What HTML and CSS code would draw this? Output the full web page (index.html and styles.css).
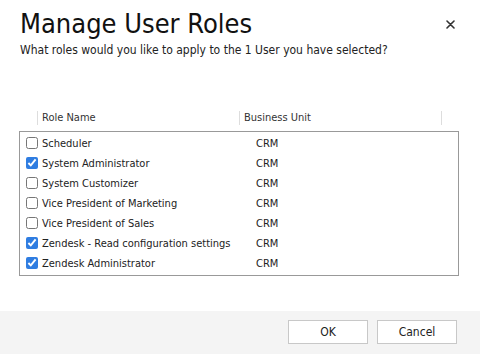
FILE: index.html
```html
<!DOCTYPE html>
<html>
<head>
<title>Manage User Roles</title>
<link rel="stylesheet" href="styles.css">
</head>
<body>

<div class="dialog">
  <div class="header">
    <h1 class="title">Manage User Roles</h1>
    <button class="close" title="Close">
      <svg width="9" height="9" viewBox="0 0 9 9"><path d="M1 1L8 8M8 1L1 8" stroke="#333" stroke-width="1.6" stroke-linecap="round"/></svg>
    </button>
  </div>
  <p class="subtitle">What roles would you like to apply to the 1 User you have selected?</p>

  <div class="grid-head">
    <div class="col col-name">Role Name</div>
    <div class="col col-unit">Business Unit</div>
    <div class="col col-end"></div>
  </div>

  <div class="grid">
    <label class="row"><input type="checkbox"><span class="name">Scheduler</span><span class="unit">CRM</span></label>
    <label class="row"><input type="checkbox" checked><span class="name">System Administrator</span><span class="unit">CRM</span></label>
    <label class="row"><input type="checkbox"><span class="name">System Customizer</span><span class="unit">CRM</span></label>
    <label class="row"><input type="checkbox"><span class="name">Vice President of Marketing</span><span class="unit">CRM</span></label>
    <label class="row"><input type="checkbox"><span class="name">Vice President of Sales</span><span class="unit">CRM</span></label>
    <label class="row"><input type="checkbox" checked><span class="name">Zendesk - Read configuration settings</span><span class="unit">CRM</span></label>
    <label class="row"><input type="checkbox" checked><span class="name">Zendesk Administrator</span><span class="unit">CRM</span></label>
  </div>

  <div class="footer">
    <button class="btn">OK</button>
    <button class="btn">Cancel</button>
  </div>
</div>

</body>
</html>
```

FILE: styles.css
```css
body {
  margin: 0;
  background: #ffffff;
  font-family: "DejaVu Sans Condensed", "DejaVu Sans", sans-serif;
  color: #222;
}

.dialog {
  width: 480px;
  height: 354px;
  display: flex;
  flex-direction: column;
}

.header {
  display: flex;
  justify-content: space-between;
  align-items: center;
  padding: 8px 24px 0 20px;
}

.title {
  margin: 0;
  font-size: 27px;
  font-weight: normal;
  line-height: 32px;
  color: #111;
}

.close {
  border: none;
  background: none;
  padding: 0;
  width: 12px;
  height: 12px;
  display: flex;
  align-items: center;
  justify-content: center;
  cursor: pointer;
}

.subtitle {
  margin: 3px 0 0 20px;
  font-size: 12px;
  line-height: 14px;
  color: #222;
}

.grid-head {
  display: flex;
  margin: 54px 0 0 37px;
  height: 14px;
}

.col {
  border-left: 1px solid #ddd;
  font-size: 11px;
  line-height: 14px;
  color: #333;
  padding-left: 4px;
  box-sizing: border-box;
}

.col-name {
  width: 202px;
}

.col-unit {
  width: 202px;
}

.grid {
  margin: 6px 0 0 19px;
  width: 440px;
  height: 145px;
  box-sizing: border-box;
  border: 1px solid #999;
  padding-top: 1px;
}

.row {
  display: flex;
  align-items: center;
  height: 20px;
  font-size: 11px;
  color: #222;
}

.row input {
  margin: 0 4px 0 6px;
  width: 12px;
  height: 12px;
  accent-color: #2f7de1;
}

.name {
  width: 214px;
}

.footer {
  margin-top: auto;
  height: 43px;
  background: #f4f4f4;
  display: flex;
  justify-content: flex-end;
  align-items: center;
  gap: 9px;
  padding: 0 23px 0 0;
}

.btn {
  width: 80px;
  height: 24px;
  background: #ffffff;
  border: 1px solid #c8c8c8;
  font-family: inherit;
  font-size: 12px;
  color: #222;
  margin-bottom: 2px;
}
```
